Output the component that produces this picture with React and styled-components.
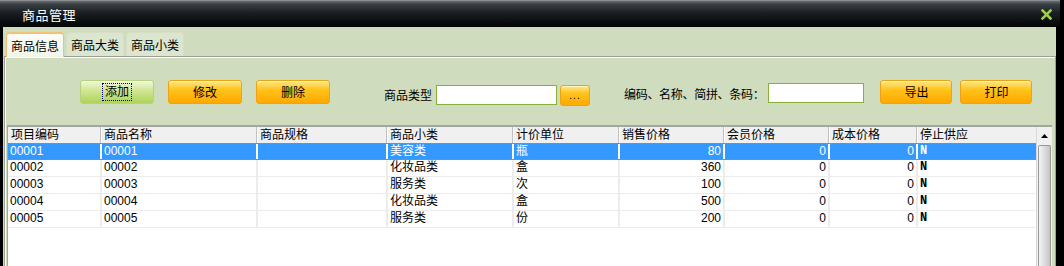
import React from "react";
import styled, { createGlobalStyle, css } from "styled-components";

const GlobalStyle = createGlobalStyle`
  html, body {
    margin: 0;
    padding: 0;
    background: #000;
    overflow: hidden;
  }
  * {
    box-sizing: border-box;
  }
`;

const FONT = `"Liberation Sans", "Noto Sans CJK SC", sans-serif`;

const columns = [
  { key: "code", title: "项目编码", width: 92 },
  { key: "name", title: "商品名称", width: 156 },
  { key: "spec", title: "商品规格", width: 130 },
  { key: "sub", title: "商品小类", width: 126 },
  { key: "unit", title: "计价单位", width: 106 },
  { key: "sale", title: "销售价格", width: 105, right: true },
  { key: "member", title: "会员价格", width: 105, right: true },
  { key: "cost", title: "成本价格", width: 88, right: true },
  { key: "stop", title: "停止供应", width: 120 },
];

const gridCols = columns.map((c) => `${c.width}px`).join(" ");

const rows = [
  { code: "00001", name: "00001", spec: "", sub: "美容类", unit: "瓶", sale: "80", member: "0", cost: "0", stop: "N" },
  { code: "00002", name: "00002", spec: "", sub: "化妆品类", unit: "盒", sale: "360", member: "0", cost: "0", stop: "N" },
  { code: "00003", name: "00003", spec: "", sub: "服务类", unit: "次", sale: "100", member: "0", cost: "0", stop: "N" },
  { code: "00004", name: "00004", spec: "", sub: "化妆品类", unit: "盒", sale: "500", member: "0", cost: "0", stop: "N" },
  { code: "00005", name: "00005", spec: "", sub: "服务类", unit: "份", sale: "200", member: "0", cost: "0", stop: "N" },
];

const Window = styled.div`
  width: 1060px;
  height: 266px;
  display: flex;
  flex-direction: column;
  font-family: ${FONT};
  font-size: 12px;
  color: #000;
`;

const TitleBar = styled.div`
  height: 27px;
  flex: none;
  display: flex;
  align-items: center;
  justify-content: space-between;
  padding: 0 8px 0 22px;
  background: linear-gradient(#6a6f72 0%, #3a4044 12%, #1a1f23 45%, #020405 100%);
  border-top: 1px solid #8a8e90;
`;

const TitleText = styled.span`
  color: #fff;
  font-size: 13px;
  font-family: "Noto Sans CJK SC", sans-serif;
  letter-spacing: 0.5px;
`;

const Body = styled.div`
  flex: 1;
  display: flex;
  flex-direction: column;
  background: #d0dcbe;
  border-left: 3px solid #000;
  border-right: 4px solid #000;
  min-height: 0;
`;

const TabBar = styled.div`
  display: flex;
  gap: 2px;
  padding: 5px 0 0 3px;
  height: 29px;
  flex: none;
`;

const Tab = styled.div`
  height: 24px;
  width: 58px;
  display: flex;
  align-items: center;
  justify-content: center;
  border-radius: 4px 4px 0 0;
  background: #dce5cd;
  border: 1px solid #d6dfc6;
  border-bottom: none;
  ${(p) =>
    p.$active &&
    css`
      background: linear-gradient(#fbfcf6, #f2f5ea);
      border: 1px solid #efc27c;
      border-top: 2px solid #f3c27a;
      border-bottom: none;
      position: relative;
      z-index: 1;
      height: 25px;
    `}
`;

const Panel = styled.div`
  flex: 1;
  display: flex;
  flex-direction: column;
  margin-left: 1px;
  border: 1px solid #9c9e9a;
  border-bottom: none;
  box-shadow: inset 1px 1px 0 #ffffff;
  padding: 4px 2px 0 2px;
  min-height: 0;
`;

const Toolbar = styled.div`
  height: 64px;
  flex: none;
  display: flex;
  align-items: center;
  padding-left: 73px;
  padding-bottom: 3px;
`;

const Button = styled.button`
  width: ${(p) => p.$w || 74}px;
  height: 24px;
  margin-left: ${(p) => p.$ml || 0}px;
  margin-top: ${(p) => p.$mt || 0}px;
  border-radius: 3px;
  font-family: ${FONT};
  font-size: 12px;
  color: #000;
  padding: 0;
  cursor: pointer;
  display: flex;
  align-items: center;
  justify-content: center;
  border: 1px solid #eda414;
  background: linear-gradient(#ffe98a 0%, #ffc21a 40%, #ffa800 100%);
  box-shadow: inset 0 1px 0 rgba(255, 255, 255, 0.5);
  ${(p) =>
    p.$green &&
    css`
      border: 1px solid #b6d27a;
      background: linear-gradient(#f0f8d8 0%, #cfe690 45%, #aed35a 100%);
    `}
`;

const SmallButton = styled(Button)`
  height: 21px;
  font-size: 10px;
  letter-spacing: 1px;
`;

const Focus = styled.span`
  outline: 1px dotted #000080;
  outline-offset: 1px;
  padding: 0 1px;
  line-height: 14px;
`;

const Label = styled.span`
  margin-left: ${(p) => p.$ml || 0}px;
  margin-top: ${(p) => p.$mt || 0}px;
  white-space: nowrap;
  letter-spacing: ${(p) => p.$ls || 0}px;
`;

const Input = styled.input`
  width: ${(p) => p.$w}px;
  height: 20px;
  margin-left: ${(p) => p.$ml || 0}px;
  margin-top: ${(p) => p.$mt || 0}px;
  border: 1px solid #86b23c;
  background: #fff;
  outline: none;
  font-family: ${FONT};
  font-size: 12px;
`;

const Grid = styled.div`
  flex: 1;
  display: flex;
  border-top: 2px solid #a3a5a1;
  border-left: 1px solid #a3a5a1;
  margin-right: 1px;
  background: #fff;
  min-height: 0;
  overflow: hidden;
`;

const GridMain = styled.div`
  flex: 1;
  display: flex;
  flex-direction: column;
`;

const HeaderRow = styled.div`
  display: grid;
  grid-template-columns: ${gridCols};
  height: 17px;
  background: #f0f0f0;
  border-bottom: 1px solid #c8c8c8;
`;

const HeaderCell = styled.div`
  padding-left: 3px;
  line-height: 16px;
  border-left: 1px solid #c0c0c0;
  box-shadow: inset 1px 0 0 #fff;
  white-space: nowrap;
  overflow: hidden;
  &:first-child {
    border-left: none;
    box-shadow: none;
  }
`;

const Row = styled.div`
  display: grid;
  grid-template-columns: ${gridCols};
  height: 17px;
  border-bottom: 1px solid #ececec;
  ${(p) =>
    p.$selected &&
    css`
      background: #3399ff;
      color: #fff;
      border-top: 1px solid #e0780f;
      border-bottom: 1px solid #e0780f;
      margin-top: -1px;
    `}
`;

const Cell = styled.div`
  line-height: 15px;
  padding: 0 2px;
  text-align: ${(p) => (p.$right ? "right" : "left")};
  border-left: 2px solid ${(p) => (p.$selected ? "#ffffff" : "#ececec")};
  white-space: nowrap;
  overflow: hidden;
  font-family: ${(p) => (p.$mono ? `"Liberation Mono", monospace` : FONT)};
  font-weight: ${(p) => (p.$mono ? 700 : 400)};
  &:first-child {
    border-left: none;
  }
`;

const ScrollBar = styled.div`
  width: 16px;
  flex: none;
  display: flex;
  flex-direction: column;
  background: #f0f0f0;
  border-left: 1px solid #d8d8d8;
`;

const ScrollUp = styled.div`
  height: 17px;
  display: flex;
  align-items: center;
  justify-content: center;
`;

const Thumb = styled.div`
  flex: 1;
  margin: 1px 1px 0 1px;
  border: 1px solid #9a9a9a;
  border-bottom: none;
  border-radius: 2px 2px 0 0;
  background: linear-gradient(90deg, #f4f4f4 0%, #e2e2e2 40%, #c4c4c4 100%);
`;

export default function App() {
  return (
    <>
      <GlobalStyle />
      <Window>
        <TitleBar>
          <TitleText>商品管理</TitleText>
          <svg width="11" height="11" viewBox="0 0 11 11">
            <path d="M1.5 1.5 L9.5 9.5 M9.5 1.5 L1.5 9.5" stroke="#9fd13a" strokeWidth="2.6" strokeLinecap="square" />
          </svg>
        </TitleBar>
        <Body>
          <TabBar>
            <Tab $active>商品信息</Tab>
            <Tab>商品大类</Tab>
            <Tab>商品小类</Tab>
          </TabBar>
          <Panel>
            <Toolbar>
              <Button $green>
                <Focus>添加</Focus>
              </Button>
              <Button $ml={14}>修改</Button>
              <Button $ml={14}>删除</Button>
              <Label $ml={54} $mt={6}>商品类型</Label>
              <Input $w={121} $ml={4} $mt={6} />
              <SmallButton $w={30} $ml={3} $mt={7}>...</SmallButton>
              <Label $ml={34} $mt={4} $ls={-0.3}>编码、名称、简拼、条码：</Label>
              <Input $w={96} $ml={4} $mt={2} />
              <Button $w={72} $ml={16}>导出</Button>
              <Button $w={72} $ml={8}>打印</Button>
            </Toolbar>
            <Grid>
              <GridMain>
                <HeaderRow>
                  {columns.map((c) => (
                    <HeaderCell key={c.key}>{c.title}</HeaderCell>
                  ))}
                </HeaderRow>
                {rows.map((r, i) => (
                  <Row key={r.code} $selected={i === 0}>
                    {columns.map((c) => (
                      <Cell
                        key={c.key}
                        $right={c.right}
                        $selected={i === 0}
                        $mono={c.key === "stop"}
                      >
                        {r[c.key]}
                      </Cell>
                    ))}
                  </Row>
                ))}
              </GridMain>
              <ScrollBar>
                <ScrollUp>
                  <svg width="7" height="4" viewBox="0 0 7 4">
                    <path d="M0 4 L3.5 0 L7 4 Z" fill="#000" />
                  </svg>
                </ScrollUp>
                <Thumb />
              </ScrollBar>
            </Grid>
          </Panel>
        </Body>
      </Window>
    </>
  );
}
